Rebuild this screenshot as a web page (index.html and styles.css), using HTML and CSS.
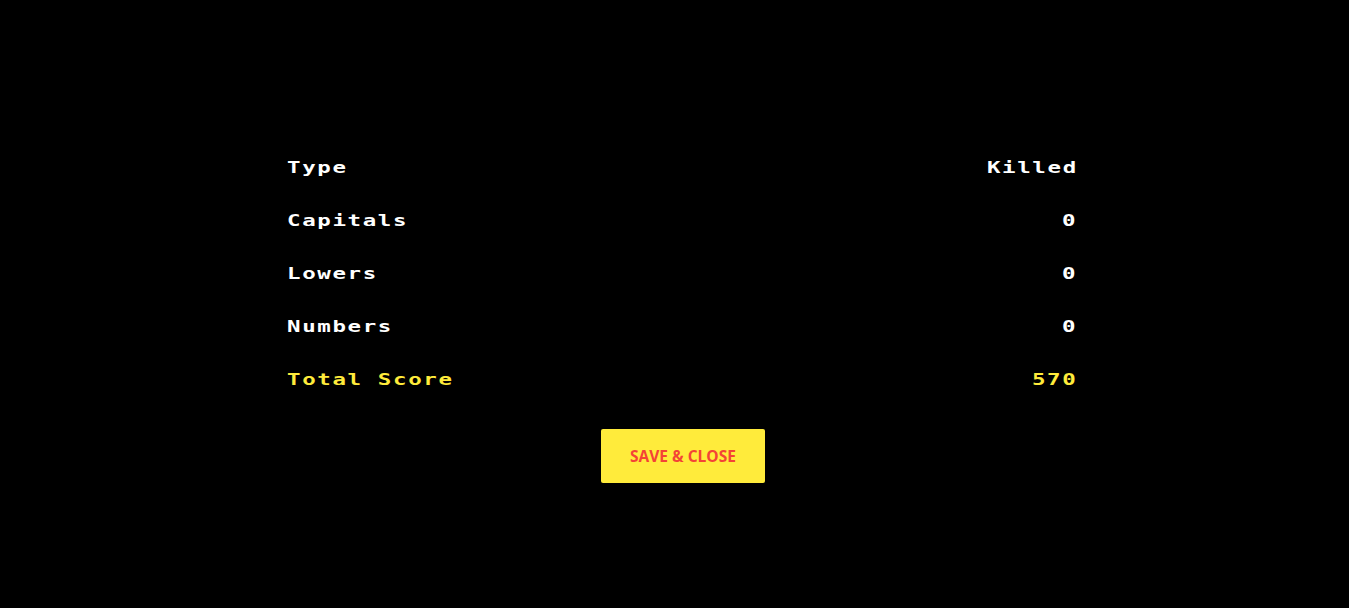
FILE: index.html
```html
<!DOCTYPE html>
<html>
<head>
<meta charset="utf-8">
<link rel="stylesheet" href="styles.css">
</head>
<body>
<div class="page">
  <div class="panel">
    <div class="row head"><span class="label">Type</span><span class="val">Killed</span></div>
    <div class="row"><span class="label">Capitals</span><span class="val">0</span></div>
    <div class="row"><span class="label">Lowers</span><span class="val">0</span></div>
    <div class="row"><span class="label">Numbers</span><span class="val">0</span></div>
    <div class="row total"><span class="label">Total Score</span><span class="val">570</span></div>
    <div class="actions"><button class="btn">SAVE &amp; CLOSE</button></div>
  </div>
</div>
</body>
</html>
```
FILE: styles.css
```css
html, body {
  margin: 0;
  padding: 0;
  background: #000;
  height: 100%;
}
.page {
  padding: 141px 0 0 17px;
}
.panel {
  width: 789px;
  margin: 0 auto;
}
.row {
  display: flex;
  justify-content: space-between;
  align-items: center;
  height: 53px;
  font-family: "DejaVu Sans Mono", monospace;
  font-weight: bold;
  font-size: 16.5px;
  letter-spacing: 1.2px;
  color: #fff;
}
.row .label {
  display: inline-block;
  margin-left: -1.5px;
  transform: scaleX(1.36);
  transform-origin: left center;
}
.row .val {
  display: inline-block;
  margin-right: 0;
  transform: scaleX(1.36);
  transform-origin: right center;
}
.row.total { color: #ffeb3b; }
.actions {
  display: flex;
  justify-content: center;
  padding-top: 23px;
}
.btn {
  width: 164px;
  height: 54px;
  background: #ffeb3b;
  color: #f44336;
  border: none;
  border-radius: 2px;
  font-family: "Open Sans", sans-serif;
  font-weight: bold;
  font-size: 15.5px;
  padding: 0;
}
```
